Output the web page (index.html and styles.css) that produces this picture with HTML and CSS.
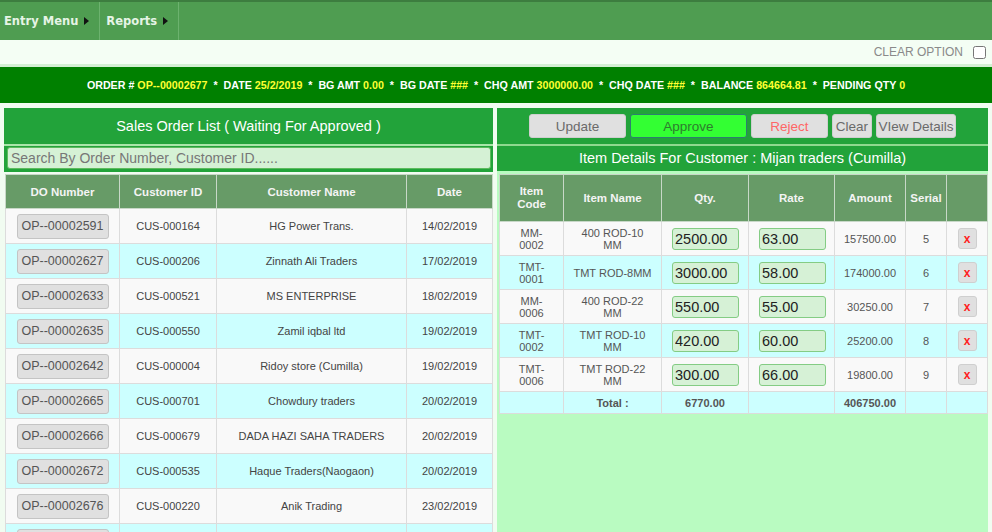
FILE: index.html
```html
<!DOCTYPE html>
<html>
<head>
<meta charset="utf-8">
<title>Sales Order Approval</title>
<link rel="stylesheet" href="styles.css">
</head>
<body>
<nav class="menubar">
  <div class="menu-item">Entry Menu<span class="caret"></span></div>
  <div class="menu-item">Reports<span class="caret"></span></div>
</nav>
<div class="optbar">
  <span class="opt-label">CLEAR OPTION</span>
  <input type="checkbox" class="opt-check">
</div>
<div class="orderbar">
  ORDER # <span class="v">OP--00002677</span> &nbsp;*&nbsp; DATE <span class="v">25/2/2019</span> &nbsp;*&nbsp; BG AMT <span class="v">0.00</span> &nbsp;*&nbsp; BG DATE <span class="v">###</span> &nbsp;*&nbsp; CHQ AMT <span class="v">3000000.00</span> &nbsp;*&nbsp; CHQ DATE <span class="v">###</span> &nbsp;*&nbsp; BALANCE <span class="v">864664.81</span> &nbsp;*&nbsp; PENDING QTY <span class="v">0</span>
</div>
<main class="main">
  <section class="left">
    <div class="panel-title">Sales Order List ( Waiting For Approved )</div>
    <div class="search-wrap">
      <input class="search" type="text" placeholder="Search By Order Number, Customer ID......">
    </div>
    <table class="list">
      <colgroup><col class="c1"><col class="c2"><col class="c3"><col class="c4"></colgroup>
      <thead><tr><th>DO Number</th><th>Customer ID</th><th>Customer Name</th><th>Date</th></tr></thead>
      <tbody>
        <tr><td><button class="do">OP--00002591</button></td><td>CUS-000164</td><td>HG Power Trans.</td><td>14/02/2019</td></tr>
        <tr class="alt"><td><button class="do">OP--00002627</button></td><td>CUS-000206</td><td>Zinnath Ali Traders</td><td>17/02/2019</td></tr>
        <tr><td><button class="do">OP--00002633</button></td><td>CUS-000521</td><td>MS ENTERPRISE</td><td>18/02/2019</td></tr>
        <tr class="alt"><td><button class="do">OP--00002635</button></td><td>CUS-000550</td><td>Zamil iqbal ltd</td><td>19/02/2019</td></tr>
        <tr><td><button class="do">OP--00002642</button></td><td>CUS-000004</td><td>Ridoy store (Cumilla)</td><td>19/02/2019</td></tr>
        <tr class="alt"><td><button class="do">OP--00002665</button></td><td>CUS-000701</td><td>Chowdury traders</td><td>20/02/2019</td></tr>
        <tr><td><button class="do">OP--00002666</button></td><td>CUS-000679</td><td>DADA HAZI SAHA TRADERS</td><td>20/02/2019</td></tr>
        <tr class="alt"><td><button class="do">OP--00002672</button></td><td>CUS-000535</td><td>Haque Traders(Naogaon)</td><td>20/02/2019</td></tr>
        <tr><td><button class="do">OP--00002676</button></td><td>CUS-000220</td><td>Anik Trading</td><td>23/02/2019</td></tr>
        <tr class="alt"><td><button class="do">OP--00002677</button></td><td>CUS-000412</td><td>Mijan traders (Cumilla)</td><td>25/02/2019</td></tr>
      </tbody>
    </table>
  </section>
  <section class="right">
    <div class="btnbar">
      <button class="btn b-update">Update</button>
      <button class="btn b-approve">Approve</button>
      <button class="btn b-reject">Reject</button>
      <button class="btn b-clear">Clear</button>
      <button class="btn b-view">VIew Details</button>
    </div>
    <div class="panel-sub">Item Details For Customer : Mijan traders (Cumilla)</div>
    <table class="items">
      <colgroup><col class="i1"><col class="i2"><col class="i3"><col class="i4"><col class="i5"><col class="i6"><col class="i7"></colgroup>
      <thead><tr><th>Item<br>Code</th><th>Item Name</th><th>Qty.</th><th>Rate</th><th>Amount</th><th>Serial</th><th></th></tr></thead>
      <tbody>
        <tr><td>MM-<br>0002</td><td>400 ROD-10<br>MM</td><td class="inp"><input class="num" value="2500.00"></td><td class="inp"><input class="num" value="63.00"></td><td>157500.00</td><td>5</td><td><button class="del">x</button></td></tr>
        <tr class="alt"><td>TMT-<br>0001</td><td>TMT ROD-8MM</td><td class="inp"><input class="num" value="3000.00"></td><td class="inp"><input class="num" value="58.00"></td><td>174000.00</td><td>6</td><td><button class="del">x</button></td></tr>
        <tr><td>MM-<br>0006</td><td>400 ROD-22<br>MM</td><td class="inp"><input class="num" value="550.00"></td><td class="inp"><input class="num" value="55.00"></td><td>30250.00</td><td>7</td><td><button class="del">x</button></td></tr>
        <tr class="alt"><td>TMT-<br>0002</td><td>TMT ROD-10<br>MM</td><td class="inp"><input class="num" value="420.00"></td><td class="inp"><input class="num" value="60.00"></td><td>25200.00</td><td>8</td><td><button class="del">x</button></td></tr>
        <tr><td>TMT-<br>0006</td><td>TMT ROD-22<br>MM</td><td class="inp"><input class="num" value="300.00"></td><td class="inp"><input class="num" value="66.00"></td><td>19800.00</td><td>9</td><td><button class="del">x</button></td></tr>
        <tr class="total"><td></td><td>Total :</td><td>6770.00</td><td></td><td>406750.00</td><td></td><td></td></tr>
      </tbody>
    </table>
  </section>
</main>
</body>
</html>
```

FILE: styles.css
```css
* { box-sizing: border-box; }
html, body { margin: 0; padding: 0; }
body {
  width: 992px;
  height: 532px;
  overflow: hidden;
  background: #f1fcf1;
  font-family: "Liberation Sans", Arial, sans-serif;
  color: #444;
}

/* top menu */
.menubar {
  height: 40px;
  background: #4f9d51;
  border-top: 2px solid #3d7d3f;
  display: flex;
  align-items: stretch;
}
.menu-item {
  display: flex;
  align-items: center;
  padding: 0 10px 0 5px;
  border-right: 1px solid #6cb26e;
  font-family: "DejaVu Sans", Verdana, sans-serif;
  font-weight: bold;
  font-size: 11.5px;
  color: #e6f4e6;
}
.menu-item:first-child { padding-left: 4px; }
.menu-item + .menu-item { padding-left: 6px; }
.caret {
  display: inline-block;
  width: 0;
  height: 0;
  margin-left: 6px;
  border-left: 5px solid #111;
  border-top: 4.5px solid transparent;
  border-bottom: 4.5px solid transparent;
}

/* clear option strip */
.optbar {
  height: 24px;
  background: #f4fef4;
  display: flex;
  align-items: center;
  justify-content: flex-end;
  padding-right: 6px;
}
.opt-label {
  font-size: 12px;
  color: #8a8a8a;
  margin-right: 10px;
}
.opt-check {
  margin: 0;
  width: 13px;
  height: 13px;
}

/* order summary bar */
.orderbar {
  height: 39px;
  border-top: 3px solid #d3efd3;
  background: #008000;
  color: #ffffff;
  font-weight: bold;
  font-size: 10.7px;
  text-align: center;
  line-height: 36px;
  white-space: nowrap;
}
.orderbar .v { color: #ffff33; }

/* main two columns */
.main {
  display: flex;
  gap: 4px;
  padding: 5px 4px 0 4px;
  height: 429px;
}
.left {
  width: 489px;
  overflow: hidden;
}
.right {
  width: 491px;
  background: #b9fbc1;
  height: 100%;
}

.panel-title {
  height: 36px;
  background: #22a33a;
  color: #ffffff;
  font-size: 14.5px;
  line-height: 36px;
  text-align: center;
}
.search-wrap {
  border-top: 2px solid #a9e6a9;
  background: #22a33a;
  padding: 1px 2px 3px 3px;
}
.search {
  display: block;
  width: 100%;
  height: 22px;
  border: 1.5px solid #5dbb5d;
  border-radius: 3px;
  background: #d5f1d5;
  padding: 0 3px;
  font-family: "Liberation Sans", Arial, sans-serif;
  font-size: 14px;
  color: #333;
}
.search::placeholder { color: #777; }

table {
  border-collapse: collapse;
  table-layout: fixed;
}
th, td {
  border: 1px solid #dcdcdc;
  text-align: center;
  vertical-align: middle;
}
th {
  background: #679b67;
  color: #f4f4f4;
  font-weight: bold;
  font-size: 11.5px;
  border-color: #c8d8c8;
}

.list {
  margin: 2px 0 0 1px;
  width: 487px;
}
.list .c1 { width: 114px; }
.list .c2 { width: 97px; }
.list .c3 { width: 190px; }
.list .c4 { width: 86px; }
.list th { height: 34px; }
.list td {
  height: 35px;
  font-size: 11px;
  color: #444;
  background: #f9f9f9;
}
.list tr.alt td { background: #ccffff; }
.do {
  width: 92px;
  height: 25px;
  padding: 0;
  border: 1px solid #c4c4c4;
  border-radius: 3px;
  background: #e0e0e0;
  color: #555;
  font-family: "Liberation Sans", Arial, sans-serif;
  font-size: 12.5px;
}

/* right panel */
.btnbar {
  height: 36px;
  background: #22a33a;
  display: flex;
  align-items: center;
  justify-content: center;
  gap: 4px;
}
.btn {
  height: 24px;
  padding: 0;
  border: 1px solid #cfcfcf;
  border-radius: 3px;
  background: #e0e0e0;
  color: #6a6a6a;
  font-family: "Liberation Sans", Arial, sans-serif;
  font-size: 13.5px;
}
.b-update { width: 97px; }
.b-approve {
  width: 117px;
  background: #33ff33;
  border-color: #2d7f70;
  color: #2e7d2e;
}
.b-reject { width: 77px; color: #ff6666; }
.b-clear { width: 40px; }
.b-view { width: 80px; }

.panel-sub {
  height: 27px;
  border-top: 2px solid #8fd98f;
  background: #22a33a;
  color: #ffffff;
  font-size: 14.5px;
  line-height: 24px;
  text-align: center;
}

.items {
  margin: 3px 0 0 2px;
  width: 488px;
}
.items .i1 { width: 64px; }
.items .i2 { width: 98px; }
.items .i3 { width: 87px; }
.items .i4 { width: 86px; }
.items .i5 { width: 71px; }
.items .i6 { width: 41px; }
.items .i7 { width: 41px; }
.items th {
  height: 47px;
  line-height: 13px;
}
.items td {
  height: 34px;
  font-size: 11px;
  line-height: 12px;
  color: #555;
  background: #f9f9f9;
}
.items tr.alt td { background: #ccffff; }
.items tr.total td {
  height: 22px;
  background: #ccffff;
  font-weight: bold;
}
.items td.inp {
  text-align: left;
  padding-left: 10px;
}
.num {
  display: block;
  width: 67px;
  height: 22px;
  border: 1.5px solid #84cc84;
  border-radius: 3px;
  background: #d6f1d6;
  padding: 0 2px;
  font-family: "Liberation Sans", Arial, sans-serif;
  font-size: 14.5px;
  color: #222;
}
.del {
  width: 19px;
  height: 21px;
  padding: 0;
  border: 1px solid #cfcfcf;
  border-radius: 3px;
  background: #e0e0e0;
  color: #ff2222;
  font-family: "Liberation Sans", Arial, sans-serif;
  font-weight: bold;
  font-size: 12px;
}
```
